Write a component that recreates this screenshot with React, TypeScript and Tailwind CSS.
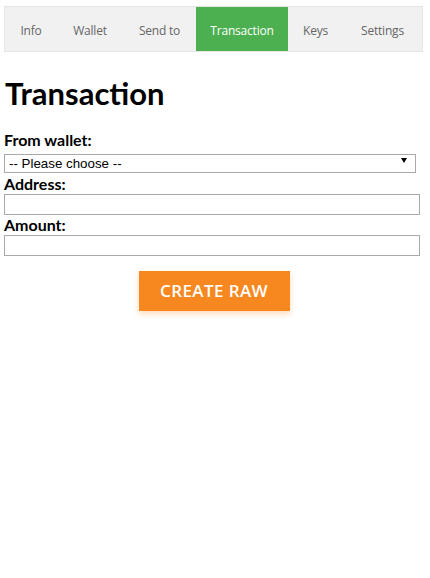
import React from "react";

const tabs = [
  { label: "Info", w: "w-[52px]" },
  { label: "Wallet", w: "w-[66px]" },
  { label: "Send to", w: "w-[73px]" },
  { label: "Transaction", w: "w-[92px]" },
  { label: "Keys", w: "w-[55px]" },
  { label: "Settings", w: "w-[79px]" },
];

const Nav = ({ active }: { active: string }) => (
  <ul className="flex w-[419px] border border-[#e5e5e5] bg-[#f1f1f1] font-['Open_Sans',sans-serif] text-[12px] tracking-[-0.2px]">
    {tabs.map((t) => (
      <li
        key={t.label}
        className={
          t.label === active
            ? `flex h-[44px] shrink-0 items-center justify-center whitespace-nowrap bg-[#4caf50] pt-[3px] text-white ${t.w}`
            : `flex h-[44px] shrink-0 items-center justify-center whitespace-nowrap pt-[3px] text-[#666] ${t.w}`
        }
      >
        {t.label}
      </li>
    ))}
  </ul>
);

export default function App() {
  return (
    <div className="min-h-[578px] bg-white px-1 pt-[6px] text-black">
      <Nav active="Transaction" />

      <h1 className="mt-[22px] pl-[1px] font-['Lato',sans-serif] text-[31px] font-bold leading-[38px]">
        Transaction
      </h1>

      <form className="mt-[18px] flex flex-col font-['Lato',sans-serif]">
        <label className="text-[16px] font-bold leading-[20px]">
          From wallet:
        </label>
        <div className="relative w-[412px]">
          <select className="h-[19px] w-full appearance-none border border-[#a9a9a9] bg-white pl-[4px] font-['Liberation_Sans',sans-serif] text-[13.33px] leading-[17px] outline-none">
            <option>-- Please choose --</option>
          </select>
          <svg
            className="pointer-events-none absolute right-[9px] top-[8px]"
            width="6"
            height="5"
            viewBox="0 0 6 5"
          >
            <path d="M0 0h6L3 5z" fill="#000" />
          </svg>
        </div>

        <label className="text-[16px] font-bold leading-[20px]">Address:</label>
        <input
          type="text"
          className="h-[21px] w-[416px] border border-[#a9a9a9] bg-white outline-none"
        />

        <label className="text-[16px] font-bold leading-[20px]">Amount:</label>
        <input
          type="text"
          className="h-[21px] w-[416px] border border-[#a9a9a9] bg-white outline-none"
        />

        <div className="mt-[15px] flex justify-center pr-[2px]">
          <button
            type="button"
            className="h-[40px] w-[151px] bg-[#f7881f] font-['Open_Sans',sans-serif] text-[17px] font-semibold uppercase tracking-[0.4px] text-white shadow-[0_3px_6px_rgba(247,136,31,0.3)]"
          >
            Create Raw
          </button>
        </div>
      </form>
    </div>
  );
}
